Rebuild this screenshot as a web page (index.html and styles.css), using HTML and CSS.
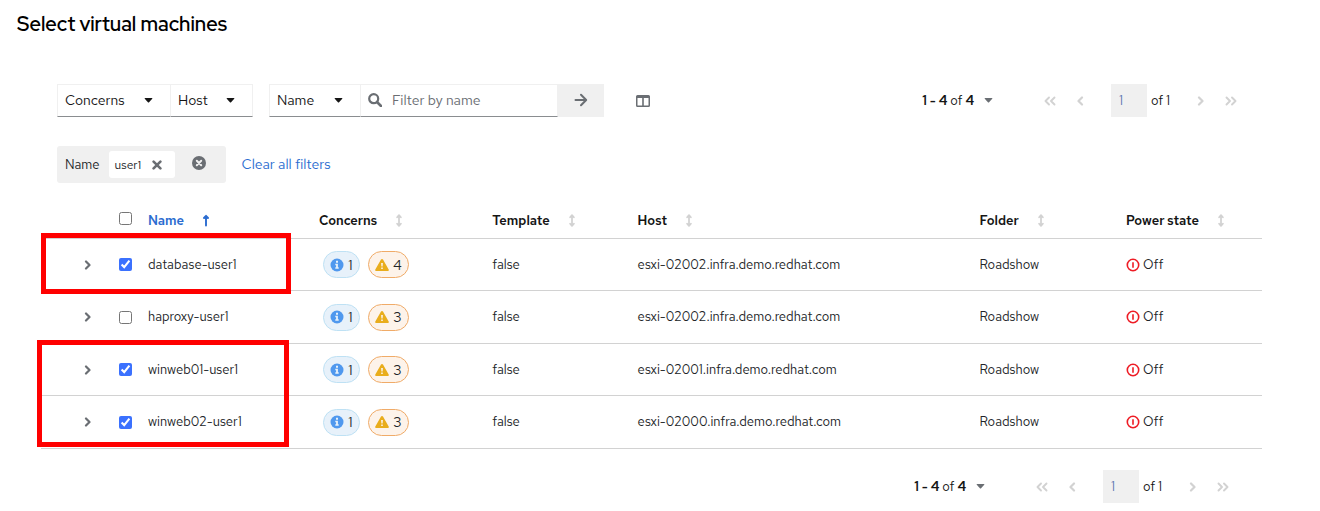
FILE: index.html
```
<!DOCTYPE html>
<html lang="en">
<head>
<meta charset="utf-8">
<title>Select virtual machines</title>
<link rel="stylesheet" href="styles.css">
</head>
<body>
<svg class="sprite" aria-hidden="true">
  <symbol id="caret" viewBox="0 0 10 6"><path d="M1 0h8q1 0 .5 1L5.700 5q-.7.7-1.400 0L.5 1Q0 0 1 0z"/></symbol>
  <symbol id="search" viewBox="0 0 14 14"><circle cx="5.700" cy="5.700" r="4.500" fill="none" stroke="currentColor" stroke-width="2.200"/><path d="M9 9l4 4" stroke="currentColor" stroke-width="2.600" stroke-linecap="round"/></symbol>
  <symbol id="arrow" viewBox="0 0 14 14"><path d="M1.500 7h10.500M7 1.800L12.200 7 7 12.200" fill="none" stroke="currentColor" stroke-width="2" stroke-linecap="round" stroke-linejoin="round"/></symbol>
  <symbol id="columns" viewBox="0 0 14 12"><path fill-rule="evenodd" d="M1.500 0h11Q14 0 14 1.500v9q0 1.500-1.500 1.500h-11Q0 12 0 10.500v-9Q0 0 1.500 0zM1.500 3v7.500h4.700V3zM7.800 3v7.500h4.700V3z"/></symbol>
  <symbol id="times" viewBox="0 0 10 10"><path d="M1.600 1.600l6.800 6.800M8.400 1.600L1.600 8.400" stroke="currentColor" stroke-width="2.600" stroke-linecap="round"/></symbol>
  <symbol id="times-circle" viewBox="0 0 14 14"><circle cx="7" cy="7" r="7"/><path d="M4.800 4.800l4.400 4.400M9.200 4.800L4.800 9.200" stroke="#f0f0f0" stroke-width="2" stroke-linecap="round"/></symbol>
  <symbol id="right" viewBox="0 0 8 10"><path d="M2 1.500L5.500 5 2 8.500" fill="none" stroke="currentColor" stroke-width="2.200" stroke-linecap="round" stroke-linejoin="round"/></symbol>
  <symbol id="left" viewBox="0 0 8 10"><path d="M6 1.500L2.500 5 6 8.500" fill="none" stroke="currentColor" stroke-width="2.200" stroke-linecap="round" stroke-linejoin="round"/></symbol>
  <symbol id="first" viewBox="0 0 12 10"><path d="M5 1.500L1.500 5 5 8.500M10.500 1.500L7 5l3.500 3.500" fill="none" stroke="currentColor" stroke-width="1.900" stroke-linecap="round" stroke-linejoin="round"/></symbol>
  <symbol id="last" viewBox="0 0 12 10"><path d="M1.500 1.500L5 5 1.500 8.500M7 1.500L10.500 5 7 8.500" fill="none" stroke="currentColor" stroke-width="1.900" stroke-linecap="round" stroke-linejoin="round"/></symbol>
  <symbol id="sort" viewBox="0 0 6 14"><path d="M3 1.500v11M1 3.500l2-2.200 2 2.200M1 10.500l2 2.200 2-2.200" fill="none" stroke="currentColor" stroke-width="1.900" stroke-linecap="round" stroke-linejoin="round"/></symbol>
  <symbol id="sort-up" viewBox="0 0 6 12"><path d="M3 1.500V11M1 3.500l2-2.200 2 2.200" fill="none" stroke="currentColor" stroke-width="1.900" stroke-linecap="round" stroke-linejoin="round"/></symbol>
  <symbol id="info" viewBox="0 0 14 14"><circle cx="7" cy="7" r="6.500"/><path d="M6 2.800h2v2H6zM5.300 5.800h2.600v3.500h.8v1.400H5.300V9.300h.8V7.200h-.8z" fill="#e7f1fa"/></symbol>
  <symbol id="warning" viewBox="0 0 14 12"><path d="M7 0q.7 0 1 .6l5.700 9.900q.6 1.500-.9 1.500H1.200q-1.500 0-.9-1.500L6 .6Q6.300 0 7 0z"/><path d="M6.100 4h1.800l-.3 3.600H6.400zM6.200 8.500h1.600v1.600H6.200z" fill="#fdf3ea"/></symbol>
  <symbol id="off" viewBox="0 0 14 14"><circle cx="7" cy="7" r="5.700" fill="none" stroke="currentColor" stroke-width="1.600"/><path d="M7 4.300v5.400" stroke="currentColor" stroke-width="1.600"/></symbol>
</svg>

<main class="page">
  <h1 class="title">Select virtual machines</h1>

  <div class="toolbar">
    <div class="group">
      <div class="picker picker-concerns">
        <select class="picker-select" aria-label="Filter by concerns"><option>Concerns</option></select>
        <svg class="caret"><use href="#caret"/></svg>
      </div>
      <div class="picker picker-host">
        <select class="picker-select" aria-label="Filter by host"><option>Host</option></select>
        <svg class="caret"><use href="#caret"/></svg>
      </div>
    </div>
    <div class="group">
      <div class="picker picker-name">
        <select class="picker-select" aria-label="Filter attribute"><option>Name</option></select>
        <svg class="caret"><use href="#caret"/></svg>
      </div>
      <label class="search">
        <svg class="icon14"><use href="#search"/></svg>
        <input class="search-input" type="text" placeholder="Filter by name" aria-label="Filter by name">
      </label>
      <button class="submit" type="button" aria-label="Apply filter"><svg class="icon14"><use href="#arrow"/></svg></button>
    </div>
    <button class="plain columns" type="button" aria-label="Manage columns"><svg class="icon-columns"><use href="#columns"/></svg></button>
    <nav class="pager" aria-label="Top pagination">
      <button class="range" type="button"><span><b>1 - 4</b> of <b>4</b></span><svg class="caret"><use href="#caret"/></svg></button>
      <button class="plain step" type="button" disabled aria-label="First page"><svg class="icon-double"><use href="#first"/></svg></button>
      <button class="plain step" type="button" disabled aria-label="Previous page"><svg class="icon-single"><use href="#left"/></svg></button>
      <input class="page-input" type="text" value="1" disabled aria-label="Current page">
      <span class="total">of 1</span>
      <button class="plain step" type="button" disabled aria-label="Next page"><svg class="icon-single"><use href="#right"/></svg></button>
      <button class="plain step" type="button" disabled aria-label="Last page"><svg class="icon-double"><use href="#last"/></svg></button>
    </nav>
  </div>

  <div class="filters">
    <div class="chips">
      <span>Name</span>
      <span class="chip">user1<button class="plain" type="button" aria-label="Remove user1"><svg class="icon10"><use href="#times"/></svg></button></span>
      <button class="plain chips-close" type="button" aria-label="Remove name filters"><svg class="icon14"><use href="#times-circle"/></svg></button>
    </div>
    <a class="clear" href="#">Clear all filters</a>
  </div>

  <div class="table-area">
    <table class="vms">
      <colgroup><col class="c-expand"><col class="c-check"><col class="c-name"><col class="c-concerns"><col class="c-template"><col class="c-host"><col class="c-folder"><col></colgroup>
      <thead>
        <tr>
          <th></th>
          <th><input class="check" type="checkbox" aria-label="Select all"></th>
          <th class="sorted"><button class="sort" type="button">Name<svg class="sort-icon"><use href="#sort-up"/></svg></button></th>
          <th><button class="sort" type="button">Concerns<svg class="sort-icon"><use href="#sort"/></svg></button></th>
          <th><button class="sort" type="button">Template<svg class="sort-icon"><use href="#sort"/></svg></button></th>
          <th><button class="sort" type="button">Host<svg class="sort-icon"><use href="#sort"/></svg></button></th>
          <th><button class="sort" type="button">Folder<svg class="sort-icon"><use href="#sort"/></svg></button></th>
          <th><button class="sort" type="button">Power state<svg class="sort-icon"><use href="#sort"/></svg></button></th>
        </tr>
      </thead>
      <tbody>
        <tr>
          <td class="expand"><button class="plain" type="button" aria-label="Expand"><svg class="icon-single"><use href="#right"/></svg></button></td>
          <td><input class="check" type="checkbox" id="vm1" checked></td>
          <td><label for="vm1">database-user1</label></td>
          <td><div class="badges"><span class="badge info"><svg class="icon14"><use href="#info"/></svg>1</span><span class="badge warn"><svg class="icon-warn"><use href="#warning"/></svg>4</span></div></td>
          <td>false</td><td>esxi-02002.infra.demo.redhat.com</td><td>Roadshow</td>
          <td><span class="power"><svg class="icon14"><use href="#off"/></svg>Off</span></td>
        </tr>
        <tr>
          <td class="expand"><button class="plain" type="button" aria-label="Expand"><svg class="icon-single"><use href="#right"/></svg></button></td>
          <td><input class="check" type="checkbox" id="vm2"></td>
          <td><label for="vm2">haproxy-user1</label></td>
          <td><div class="badges"><span class="badge info"><svg class="icon14"><use href="#info"/></svg>1</span><span class="badge warn"><svg class="icon-warn"><use href="#warning"/></svg>3</span></div></td>
          <td>false</td><td>esxi-02002.infra.demo.redhat.com</td><td>Roadshow</td>
          <td><span class="power"><svg class="icon14"><use href="#off"/></svg>Off</span></td>
        </tr>
        <tr>
          <td class="expand"><button class="plain" type="button" aria-label="Expand"><svg class="icon-single"><use href="#right"/></svg></button></td>
          <td><input class="check" type="checkbox" id="vm3" checked></td>
          <td><label for="vm3">winweb01-user1</label></td>
          <td><div class="badges"><span class="badge info"><svg class="icon14"><use href="#info"/></svg>1</span><span class="badge warn"><svg class="icon-warn"><use href="#warning"/></svg>3</span></div></td>
          <td>false</td><td>esxi-02001.infra.demo.redhat.com</td><td>Roadshow</td>
          <td><span class="power"><svg class="icon14"><use href="#off"/></svg>Off</span></td>
        </tr>
        <tr>
          <td class="expand"><button class="plain" type="button" aria-label="Expand"><svg class="icon-single"><use href="#right"/></svg></button></td>
          <td><input class="check" type="checkbox" id="vm4" checked></td>
          <td><label for="vm4">winweb02-user1</label></td>
          <td><div class="badges"><span class="badge info"><svg class="icon14"><use href="#info"/></svg>1</span><span class="badge warn"><svg class="icon-warn"><use href="#warning"/></svg>3</span></div></td>
          <td>false</td><td>esxi-02000.infra.demo.redhat.com</td><td>Roadshow</td>
          <td><span class="power"><svg class="icon14"><use href="#off"/></svg>Off</span></td>
        </tr>
      </tbody>
    </table>
    <div class="highlight highlight-first"></div>
    <div class="highlight highlight-second"></div>
  </div>

  <div class="footer">
    <nav class="pager" aria-label="Bottom pagination">
      <button class="range" type="button"><span><b>1 - 4</b> of <b>4</b></span><svg class="caret"><use href="#caret"/></svg></button>
      <button class="plain step" type="button" disabled aria-label="First page"><svg class="icon-double"><use href="#first"/></svg></button>
      <button class="plain step" type="button" disabled aria-label="Previous page"><svg class="icon-single"><use href="#left"/></svg></button>
      <input class="page-input" type="text" value="1" disabled aria-label="Current page">
      <span class="total">of 1</span>
      <button class="plain step" type="button" disabled aria-label="Next page"><svg class="icon-single"><use href="#right"/></svg></button>
      <button class="plain step" type="button" disabled aria-label="Last page"><svg class="icon-double"><use href="#last"/></svg></button>
    </nav>
  </div>
</main>
</body>
</html>
```

FILE: styles.css
```
* { box-sizing: border-box; }
body {
  margin: 0;
  background: #fff;
  color: #212427;
  font: 13px/20px "Red Hat Text", Roboto, "Liberation Sans", sans-serif;
}
button, input, select { font: inherit; color: inherit; margin: 0; }
svg { display: block; flex: none; fill: currentColor; }
.sprite { position: absolute; width: 0; height: 0; }

.page { padding: 10px 58px 8px 41px; }
.title {
  margin: 0 0 46px -24px;
  color: #000;
  font-family: "Red Hat Display", "Red Hat Text", Roboto, sans-serif;
  font-size: 20px;
  line-height: 28px;
  font-weight: 600;
}

.icon10 { width: 10px; height: 10px; }
.icon14 { width: 14px; height: 14px; }
.icon-columns { width: 14px; height: 12px; }
.icon-warn { width: 14px; height: 12px; color: #e9ad1c; }
.icon-single { width: 8px; height: 10px; }
.icon-double { width: 12px; height: 10px; }
.caret { width: 9px; height: 5px; }

.plain {
  display: flex;
  align-items: center;
  justify-content: center;
  padding: 0;
  border: 0;
  background: none;
  color: #6a6e73;
}

.toolbar { display: flex; align-items: center; padding: 0 16px; font-size: 14px; }
.group { display: flex; margin-right: 16px; }
.picker {
  display: grid;
  align-items: center;
  height: 33px;
  border: 1px solid #f0f0f0;
  border-bottom-color: #8a8d90;
  color: #151515;
}
.picker > * { grid-area: 1 / 1; }
.picker + .picker { border-left: 0; }
.picker-concerns { width: 114px; }
.picker-host { width: 82px; }
.picker-name { width: 92px; }
.picker .caret { justify-self: end; margin-right: 17px; pointer-events: none; }
.picker-select {
  width: 100%;
  height: 31px;
  padding: 0 7px 2px;
  border: 0;
  appearance: none;
  background: none;
}
.search {
  display: flex;
  align-items: center;
  gap: 10px;
  width: 197px;
  padding: 0 7px 2px;
  border: 1px solid #f0f0f0;
  border-left: 0;
  border-bottom-color: #8a8d90;
  color: #6a6e73;
}
.search-input { flex: 1; min-width: 0; padding: 0; border: 0; background: none; outline: 0; }
.search-input::placeholder { color: #6a6e73; }
.submit {
  display: grid;
  place-items: center;
  width: 46px;
  padding: 0 0 2px;
  border: 0;
  background: #f0f0f0;
  color: #6a6e73;
}
.columns { width: 46px; height: 33px; }

.pager { display: flex; align-items: center; margin-left: auto; font-size: 13px; color: #151515; }
.pager b { font-weight: 600; }
.range {
  display: flex;
  align-items: center;
  gap: 10px;
  margin-right: 42px;
  padding: 0;
  border: 0;
  background: none;
}
.range .caret { color: #6a6e73; }
.step { width: 30px; height: 33px; color: #d2d2d2; }
.page-input {
  width: 36px;
  height: 33px;
  margin-left: 16px;
  padding: 0 8px;
  border: 0;
  background: #f0f0f0;
  color: #5a75b0;
}
.total { width: 35px; margin-left: 4px; }

.filters { display: flex; align-items: center; gap: 16px; margin: 29px 16px 20px; font-size: 14px; }
.chips {
  display: flex;
  align-items: center;
  height: 37px;
  padding: 0 20px 0 8px;
  border-radius: 3px;
  background: #f0f0f0;
  font-size: 13px;
}
.chip {
  display: flex;
  align-items: center;
  justify-content: space-between;
  width: 66px;
  height: 27px;
  margin: 0 17px 0 9px;
  padding: 0 13px 0 6px;
  border-radius: 3px;
  background: #fff;
  font-size: 12px;
}
.chips-close { padding-bottom: 4px; }
.clear { padding-bottom: 2px; color: #2b6cd0; text-decoration: none; }

.table-area { position: relative; }
.vms { width: 100%; table-layout: fixed; border-collapse: separate; border-spacing: 0; }
.c-expand { width: 70px; }
.c-check { width: 29px; }
.c-name { width: 14%; }
.c-concerns { width: 14.2%; }
.c-template { width: 11.9%; }
.c-host { width: 28%; }
.c-folder { width: 12%; }
.vms th, .vms td { padding: 0 8px; border-bottom: 1px solid #d2d2d2; text-align: left; }
.vms th { height: 36px; color: #151515; font-weight: 600; }
.vms th .check { margin-bottom: 4px; }
.vms td { height: 52px; }
.vms tr:nth-child(even) td { height: 53px; }
.vms td.expand { padding-left: 43px; }
.check { display: block; width: 13px; height: 13px; accent-color: #3b71fe; }
.sort {
  display: flex;
  align-items: center;
  gap: 19px;
  padding: 0;
  border: 0;
  background: none;
  font-weight: 600;
}
.sort-icon { width: 6px; height: 13px; color: #d2d2d2; }
.sorted .sort, .sorted .sort-icon { color: #2b6cd0; }
.badges { display: flex; gap: 8px; padding-left: 4px; }
.badge {
  display: flex;
  align-items: center;
  justify-content: center;
  gap: 4px;
  height: 27px;
  border: 1px solid;
  border-radius: 14px;
  font-size: 14px;
}
.info { width: 37px; border-color: #bee1f4; background: #e7f1fa; }
.info svg { color: #4f98ee; }
.warn { width: 41px; border-color: #f0ab68; background: #fdf3ea; }
.power { display: flex; align-items: center; gap: 3px; }
.power svg { color: #ee1c25; }

.highlight { position: absolute; border: 5px solid #f00; pointer-events: none; }
.highlight-first { top: 30px; left: 0; width: 250px; height: 61px; }
.highlight-second { top: 137px; left: -4px; width: 252px; height: 107px; }

.footer { display: flex; padding: 21px 24px 0 0; }
```
